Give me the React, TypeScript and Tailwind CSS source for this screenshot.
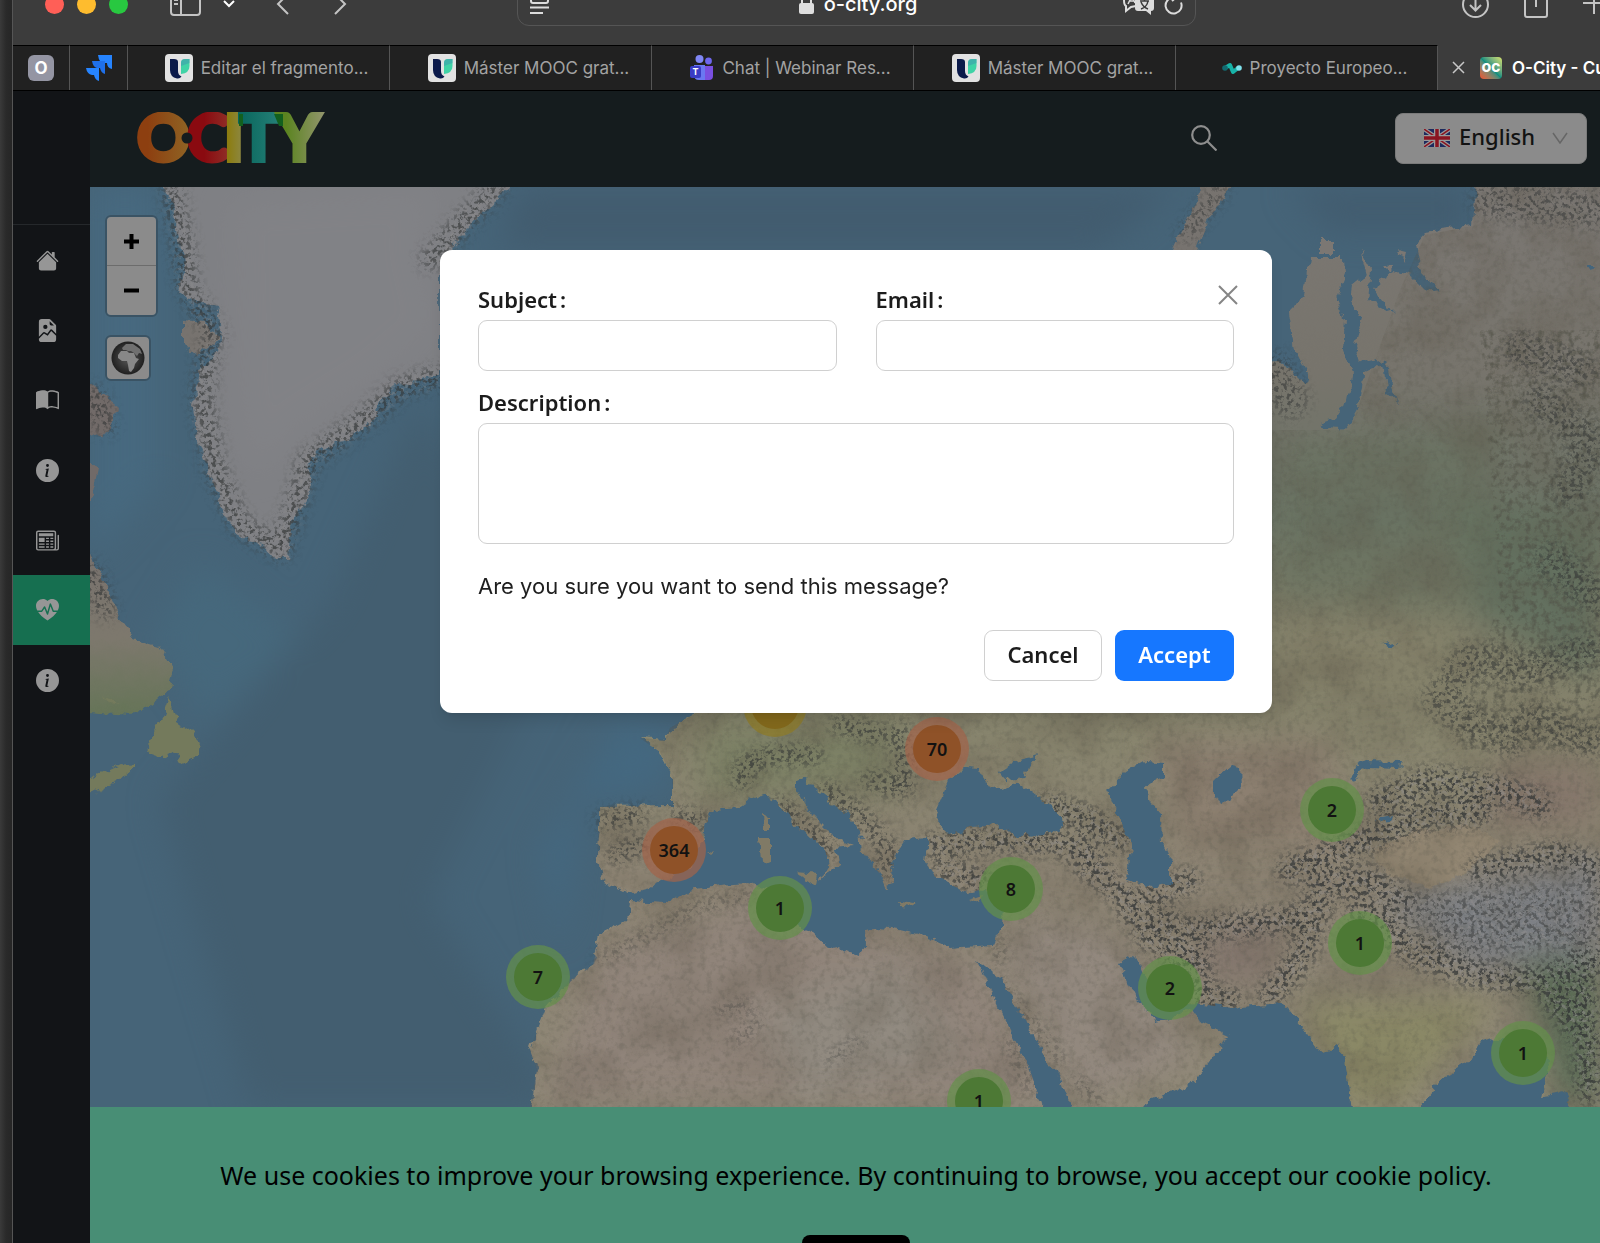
import React, { useState } from 'react';
import {
  BsBookHalf,
  BsFileEarmarkImageFill,
  BsHeartPulseFill,
  BsHouseFill,
  BsInfoCircleFill,
  BsNewspaper,
} from 'react-icons/bs';

interface Cluster {
  x: number;
  y: number;
  count: number;
  tone: 'green' | 'orange' | 'yellow';
}

const clusters: Cluster[] = [
  { x: 775, y: 705, count: 12, tone: 'yellow' },
  { x: 937, y: 749, count: 70, tone: 'orange' },
  { x: 674, y: 850, count: 364, tone: 'orange' },
  { x: 780, y: 908, count: 1, tone: 'green' },
  { x: 1011, y: 889, count: 8, tone: 'green' },
  { x: 979, y: 1101, count: 1, tone: 'green' },
  { x: 538, y: 977, count: 7, tone: 'green' },
  { x: 1332, y: 810, count: 2, tone: 'green' },
  { x: 1360, y: 943, count: 1, tone: 'green' },
  { x: 1170, y: 988, count: 2, tone: 'green' },
  { x: 1523, y: 1053, count: 1, tone: 'green' },
];

const tones = {
  green: { outer: '#64904a', inner: '#4d7935' },
  orange: { outer: '#a2644a', inner: '#8f5228' },
  yellow: { outer: '#8f7a24', inner: '#83691c' },
};

const navItems = [
  { label: 'Home', icon: BsHouseFill },
  { label: 'Gallery', icon: BsFileEarmarkImageFill },
  { label: 'Learn', icon: BsBookHalf },
  { label: 'Information', icon: BsInfoCircleFill },
  { label: 'News', icon: BsNewspaper },
  { label: 'Health', icon: BsHeartPulseFill, active: true },
  { label: 'About', icon: BsInfoCircleFill },
];

const MoocIcon = () => (
  <svg className="w-7 h-7 shrink-0" viewBox="0 0 28 28">
    <rect width="28" height="28" rx="4" fill="#e2e2e2" />
    <path d="M5 5h4q4 0 4 3v9q0 4 3.500 5.500Q15 25 12 24.500 5 23 5 16z" fill="#0b1a4a" />
    <path d="M16 20V9q0-4 4-4h4.500v7q0 7-8.500 8z" fill="#3fd3a6" />
    <path d="M16 12V9q0-4 4-4h4.500v4z" fill="#3f9fae" opacity=".6" />
  </svg>
);

const TeamsIcon = () => (
  <svg className="w-6 h-7 shrink-0" viewBox="0 0 24 28">
    <circle cx="9.500" cy="5" r="4" fill="#8087f5" />
    <circle cx="18.500" cy="7" r="3.400" fill="#6f67ee" />
    <path d="M14 12h9v10q0 4-4 4h-5z" fill="#7a4fe0" />
    <path d="M4 11h11v15H9q-5 0-5-5z" fill="#6a78f2" />
    <rect y="12" width="11" height="12" rx="2" fill="#3a3cc4" />
    <text x="5.500" y="21" fontSize="9" fontWeight="700" textAnchor="middle" fill="#fff" fontFamily="Inter, sans-serif">T</text>
  </svg>
);

const ProjectIcon = () => (
  <svg className="w-5 h-5 shrink-0" viewBox="0 0 20 20">
    <path d="M3 10l5-3 3 7 5-4" fill="none" stroke="#17b3a8" strokeWidth="4" strokeLinecap="round" strokeLinejoin="round" />
    <circle cx="3" cy="10" r="2.800" fill="#136a70" />
    <circle cx="17" cy="10" r="2.800" fill="#7fe3ee" />
  </svg>
);

const tabs = [
  { title: 'Editar el fragmento...', icon: MoocIcon },
  { title: 'Máster MOOC grat...', icon: MoocIcon },
  { title: 'Chat | Webinar Res...', icon: TeamsIcon },
  { title: 'Máster MOOC grat...', icon: MoocIcon },
  { title: 'Proyecto Europeo...', icon: ProjectIcon },
];

const BrowserToolbar = () => (
  <div className="h-[45px] shrink-0 bg-[#3c3c3c]">
    <div className="flex h-2 items-center pl-8 text-[#c4c4c4]">
      <div className="flex gap-[13px]">
        <span className="w-[19px] h-[19px] rounded-full bg-[#ff5f57]" />
        <span className="w-[19px] h-[19px] rounded-full bg-[#febc2e]" />
        <span className="w-[19px] h-[19px] rounded-full bg-[#28c840]" />
      </div>
      <button aria-label="Show sidebar" className="ml-[42px]">
        <svg width="31" height="24" viewBox="0 0 31 24" fill="none" stroke="currentColor" strokeWidth="2">
          <rect x="1" y="1" width="29" height="22" rx="3" />
          <path d="M11 1v22M4 8h4M4 12h4" />
        </svg>
      </button>
      <span className="ml-[11px] w-px h-7 bg-[#505050]" />
      <button aria-label="Tab groups" className="ml-[11px] text-white">
        <svg width="12" height="8" viewBox="0 0 12 8" fill="none" stroke="currentColor" strokeWidth="2"><path d="M1 1l5 5 5-5" /></svg>
      </button>
      <button aria-label="Back" className="ml-[41px]">
        <svg width="14" height="22" viewBox="0 0 14 22" fill="none" stroke="currentColor" strokeWidth="2"><path d="M12 1L2 11l10 10" /></svg>
      </button>
      <button aria-label="Forward" className="ml-[43px]">
        <svg width="14" height="22" viewBox="0 0 14 22" fill="none" stroke="currentColor" strokeWidth="2"><path d="M2 1l10 10L2 21" /></svg>
      </button>
      <div className="ml-[170px] flex h-[44px] w-[679px] shrink-0 items-center rounded-xl border border-[#555] px-3">
        <svg className="text-[#dcdcdc]" width="19" height="20" viewBox="0 0 19 20" fill="none" stroke="currentColor" strokeWidth="2">
          <rect x="1" y="1" width="17" height="8" rx="2" />
          <path d="M0 13.500h19M0 19h13" />
        </svg>
        <div className="flex flex-1 items-center justify-center gap-2.5 pl-[44px]">
          <svg width="15" height="20" viewBox="0 0 15 20" fill="#dedede">
            <rect y="9" width="15" height="11" rx="2" />
            <path d="M3 10V5q0-4 4.500-4T12 5v5" fill="none" stroke="#dedede" strokeWidth="2" />
          </svg>
          <span className="text-[20px] leading-6 font-medium text-white">o-city.org</span>
        </div>
        <svg width="32" height="24" viewBox="0 0 32 24" className="text-[#dcdcdc]">
          <path d="M13 14l-5 1-5 4v-5Q1 13 1 8q0-6 7-6h5" fill="none" stroke="currentColor" strokeWidth="2" />
          <path d="M5 12l4-8 3 7M6 9h5" fill="none" stroke="currentColor" strokeWidth="1.500" />
          <path d="M15 5h13q3 0 3 3v8q0 3-3 3v4l-5-4h-8q-3 0-3-3V8q0-3 3-3z" fill="currentColor" />
          <path d="M17 9h9M21.500 7v2M18 17q6-2 7-8M18 10q2 5 7 7" fill="none" stroke="#3c3c3c" strokeWidth="1.500" />
        </svg>
        <svg className="ml-[9px] text-[#dcdcdc]" width="19" height="22" viewBox="0 0 19 22" fill="none" stroke="currentColor" strokeWidth="2">
          <path d="M17 9.500A8 8 0 1 1 9.500 4.500h2M8 1l4 3.500L8 8" />
        </svg>
      </div>
      <button aria-label="Downloads" className="ml-[266px] shrink-0">
        <svg width="27" height="27" viewBox="0 0 27 27" fill="none" stroke="currentColor" strokeWidth="2">
          <circle cx="13.500" cy="13.500" r="12.500" />
          <path d="M13.500 6v13M8 14l5.500 5.500L19 14" />
        </svg>
      </button>
      <button aria-label="Share" className="ml-[35px] shrink-0">
        <svg width="24" height="27" viewBox="0 0 24 27" fill="none" stroke="currentColor" strokeWidth="2">
          <path d="M8 6H1v18q0 2 2 2h18q2 0 2-2V6h-7M12 0v16" />
        </svg>
      </button>
      <button aria-label="New tab" className="ml-[35px] shrink-0">
        <svg width="22" height="22" viewBox="0 0 22 22" fill="none" stroke="currentColor" strokeWidth="2"><path d="M0 10h22M11 0v21" /></svg>
      </button>
    </div>
  </div>
);

const TabStrip = () => (
  <div className="flex h-[46px] shrink-0 overflow-hidden border-b border-black bg-[#212121] text-[17px] leading-6 text-[#a3a3a3]">
    <div className="flex w-[57px] shrink-0 items-center justify-center border-t border-r border-t-black border-r-[#555]">
      <span className="flex h-[26px] w-[26px] items-center justify-center rounded-md bg-[#9495a3] text-[17px] font-bold text-white">O</span>
    </div>
    <div className="flex w-[58px] shrink-0 items-center justify-center border-t border-r border-t-black border-r-[#555]">
      <svg width="26" height="26" viewBox="0 0 26 26">
        <path d="M12 0h14v14q-5-1-5-6h-3q-5 0-6-8z" fill="#2684ff" />
        <path d="M6 6h13v13q-4-1-5-6h-3q-4-1-5-7z" fill="#1f70ea" />
        <path d="M0 13h13v13q-4-1-5-6H6q-5-1-6-7z" fill="#2684ff" />
      </svg>
    </div>
    {tabs.map((tab, index) => (
      <div key={index} className="flex w-[262px] shrink-0 items-center justify-center gap-2 border-t border-r border-t-black border-r-[#555] pl-4 whitespace-nowrap">
        <tab.icon />
        <span>{tab.title}</span>
      </div>
    ))}
    <div className="flex min-w-0 flex-1 items-center overflow-hidden bg-[#3c3c3c] pl-[14px] font-semibold whitespace-nowrap text-white">
      <button aria-label="Close tab" className="shrink-0">
        <svg width="13" height="13" viewBox="0 0 13 13" stroke="#c8c8c8" strokeWidth="1.500"><path d="M1 1l11 11M12 1L1 12" /></svg>
      </button>
      <span className="ml-[15px] flex h-[22px] w-[22px] shrink-0 items-center justify-center rounded bg-linear-to-tr from-[#f04a2a] via-[#0d8f7f] to-[#d8e36a] text-[12px] font-black text-white">OC</span>
      <span className="ml-[10px]">O-City - Cu</span>
    </div>
  </div>
);

const Sidebar = () => (
  <nav className="w-[77px] shrink-0 bg-[#121417]">
    <div className="h-[134px] border-b border-[#25282b]" />
    {navItems.map((item) => (
      <a
        key={item.label}
        href="#"
        aria-label={item.label}
        className={`flex h-[70px] items-center pl-[23px] ${item.active ? 'bg-[#166f50]' : ''}`}
      >
        <item.icon className="h-[23px] w-[23px] text-[#969696]" />
      </a>
    ))}
  </nav>
);

const Logo = () => (
  <svg width="190" height="52" viewBox="0 0 190 52" role="img" aria-label="O-City" fontFamily="Lato, sans-serif" fontWeight="900" fontSize="65" strokeWidth="4">
    <defs>
      <linearGradient id="lo"><stop offset=".2" stopColor="#8d3f10" /><stop offset="1" stopColor="#8f6424" /></linearGradient>
      <linearGradient id="lc"><stop offset=".4" stopColor="#8a0a10" /><stop offset="1" stopColor="#8f3028" /></linearGradient>
      <linearGradient id="li"><stop offset=".2" stopColor="#8c7d10" /><stop offset="1" stopColor="#8c8848" /></linearGradient>
      <linearGradient id="lt"><stop offset="0" stopColor="#08665c" /><stop offset="1" stopColor="#257f77" /></linearGradient>
      <linearGradient id="ly"><stop offset=".2" stopColor="#5b8420" /><stop offset="1" stopColor="#8f9468" /></linearGradient>
    </defs>
    <text x="0" y="49" fill="url(#lo)" stroke="url(#lo)">O</text>
    <text x="50" y="49" fill="url(#lc)" stroke="url(#lc)">C</text>
    <text x="87" y="49" fill="url(#li)" stroke="url(#li)">I</text>
    <text x="102" y="49" fill="url(#lt)" stroke="url(#lt)">T</text>
    <text x="141" y="49" fill="url(#ly)" stroke="url(#ly)">Y</text>
    <path d="M102 2h4v12h-4zM137 2h9v12h-4z" fill="#12601e" />
    <circle cx="50" cy="26" r="5.500" fill="#151c1e" />
  </svg>
);

const UkFlag = () => (
  <svg width="26" height="18" viewBox="0 0 26 18" className="shrink-0">
    <rect width="26" height="18" rx="1" fill="#1d2a5e" />
    <path d="M0 0l26 18M26 0L0 18" stroke="#999" strokeWidth="4" />
    <path d="M0 0l26 18M26 0L0 18" stroke="#8a1420" strokeWidth="1.500" />
    <path d="M13 0v18M0 9h26" stroke="#999" strokeWidth="6" />
    <path d="M13 0v18M0 9h26" stroke="#8a1420" strokeWidth="3.500" />
  </svg>
);

const SiteHeader = () => (
  <header className="flex h-24 shrink-0 items-center bg-[#151c1e] pr-[13px] pb-0.5 pl-[47px]">
    <Logo />
    <button aria-label="Search" className="mr-[178px] ml-auto">
      <svg width="26" height="26" viewBox="0 0 26 26" fill="none" stroke="#8e8e8e" strokeWidth="2.200">
        <circle cx="10" cy="10" r="8.800" />
        <path d="M16.500 16.500l9 9" />
      </svg>
    </button>
    <div className="flex h-[51px] w-[192px] items-center rounded-lg border border-[#7a7a7a] bg-[#8b8b8b] pr-[18px] pl-7">
      <UkFlag />
      <select aria-label="Language" className="ml-[9px] min-w-0 flex-1 appearance-none bg-transparent pb-1 font-[Noto_Sans,sans-serif] text-[22px] leading-8 font-medium text-[#131313] outline-none">
        <option>English</option>
      </select>
      <svg width="16" height="12" viewBox="0 0 16 12" fill="none" stroke="#666" strokeWidth="1.500"><path d="M1 1l7 10 7-10" /></svg>
    </div>
  </header>
);

const ranges = {
  // thick strokes that are filled with relief speckle
  ice: 'M172 190L182 240 188 290M195 300L215 335M208 350L202 400 215 470 240 525 282 550M280 550L297 500 308 460M310 460L370 415 400 388 440 376M430 260L470 215 495 190',
  europe: 'M745 765L770 755 815 755M740 780L750 770M605 820L640 815M680 815L700 822M615 855L640 845M780 805L830 850M825 790L860 815 890 850M870 780L905 790M900 730L905 780M885 860L890 870M840 725L880 735',
  anatolia: 'M935 845L970 840 1020 840 1080 845 1100 870M945 870L980 880M1050 805L1090 820 1120 840M1080 860L1130 900 1150 940M1150 895L1190 880',
  iran: 'M1130 910L1160 940 1200 980M1190 930L1290 920 1320 905 1300 960 1270 995M1230 1000L1200 995M1165 920L1200 960',
  asia: 'M1290 870L1340 850 1390 830 1430 815 1480 812M1380 800L1430 780 1500 790 1540 805M1320 885L1370 880 1400 900M1360 910L1420 955 1480 975 1540 980 1600 960M1480 870L1560 855 1600 870M1555 1000L1590 1040M1580 960L1590 1090',
  siberia: 'M1440 700L1470 660 1530 670 1590 650M1530 720L1590 740M1450 710L1510 740M1520 350L1580 370M1540 400L1590 440 1570 490M1490 200L1600 210M1550 560L1600 600M1275 370L1290 400',
  africa: 'M600 960L640 940 700 905 750 895M720 1010L750 1005M735 1040L760 1020M830 1060L860 1040M995 980L1030 1020 1060 1060M1075 1080L1100 1100M1000 940L1000 960M1010 1040L1030 1090',
};

const WorldMap = () => (
  <svg className="absolute inset-0 h-full w-full" viewBox="90 187 1510 920" preserveAspectRatio="xMidYMid slice" colorInterpolationFilters="sRGB" aria-hidden="true">
    <defs>
      <linearGradient id="land" x1="0" y1="187" x2="0" y2="1107" gradientUnits="userSpaceOnUse">
        <stop offset="0" stopColor="#7b7773" />
        <stop offset=".2" stopColor="#77746c" />
        <stop offset=".36" stopColor="#6c7466" />
        <stop offset=".45" stopColor="#7e7d68" />
        <stop offset=".6" stopColor="#88856e" />
        <stop offset=".75" stopColor="#8c8373" />
        <stop offset="1" stopColor="#8f8876" />
      </linearGradient>
      <linearGradient id="labrador" x1="0" y1="555" x2="0" y2="720" gradientUnits="userSpaceOnUse">
        <stop offset="0" stopColor="#77716d" />
        <stop offset=".5" stopColor="#7d786d" />
        <stop offset="1" stopColor="#647456" />
      </linearGradient>
      <filter id="coast" x="-5%" y="-5%" width="110%" height="110%">
        <feTurbulence type="fractalNoise" baseFrequency=".09" numOctaves="3" seed="4" />
        <feDisplacementMap in="SourceGraphic" scale="11" xChannelSelector="R" yChannelSelector="G" />
      </filter>
      <filter id="soft" x="-20%" y="-20%" width="140%" height="140%"><feGaussianBlur stdDeviation="16" /></filter>
      <filter id="speckle" x="90" y="187" width="1510" height="920" filterUnits="userSpaceOnUse">
        <feTurbulence type="fractalNoise" baseFrequency=".24" numOctaves="3" seed="8" result="n" />
        <feColorMatrix in="n" type="matrix" values="0 0 0 0 .2  0 0 0 0 .21  0 0 0 0 .21  6 0 0 0 -2.900" result="dark" />
        <feGaussianBlur in="SourceAlpha" stdDeviation="7" result="area" />
        <feComposite in="dark" in2="area" operator="in" />
      </filter>
      <filter id="glint" x="90" y="187" width="1510" height="920" filterUnits="userSpaceOnUse">
        <feTurbulence type="fractalNoise" baseFrequency=".22" numOctaves="3" seed="31" result="n" />
        <feColorMatrix in="n" type="matrix" values="0 0 0 0 .57  0 0 0 0 .56  0 0 0 0 .56  0 5 0 0 -2.500" result="light" />
        <feGaussianBlur in="SourceAlpha" stdDeviation="6" result="area" />
        <feComposite in="light" in2="area" operator="in" />
      </filter>
      <filter id="grain" x="90" y="187" width="1510" height="920" filterUnits="userSpaceOnUse">
        <feTurbulence type="fractalNoise" baseFrequency=".16" numOctaves="4" seed="19" />
        <feColorMatrix type="matrix" values="0 0 0 0 .32  0 0 0 0 .32  0 0 0 0 .28  3 0 0 0 -1.400" />
        <feComposite in2="SourceAlpha" operator="in" />
      </filter>
      <filter id="cloud" x="90" y="187" width="1510" height="920" filterUnits="userSpaceOnUse">
        <feTurbulence type="fractalNoise" baseFrequency=".02" numOctaves="5" seed="12" />
        <feColorMatrix type="matrix" values="0 0 0 0 .36  0 0 0 0 .33  0 0 0 0 .28  1.600 0 0 0 -.62" />
        <feComposite in2="SourceAlpha" operator="in" />
      </filter>
      <clipPath id="landClip">
        <path d="M1600 187V1107H530L537 1070 530 1050 545 1010 570 980 593 965 600 935 628 920 632 895 602 880 597 855 600 806 672 805 672 775 660 752 640 738 665 740 670 728 696 713 700 600H1270V430L1350 430 1400 290 1425 235 1473 226 1476 187z" />
      </clipPath>
    </defs>

    <rect x="90" y="187" width="1510" height="920" fill="#466478" />
    <g filter="url(#soft)">
      <path d="M420 400L560 640 430 900 560 1107H250L160 800 330 600z" fill="#435e70" />
      <path d="M520 187H1180L1100 250H500z" fill="#425c6f" />
      <path d="M1290 187H1470V230H1330z" fill="#425c6f" />
      <path d="M90 187H160V480L90 560z" fill="#47697f" />
      <path d="M150 640L200 560 300 640 210 720z" fill="#46687c" />
      <path d="M620 720L680 740 660 790 580 800 560 950 540 850z" fill="#446880" />
    </g>

    <g filter="url(#coast)">
      <path d="M163 187L172 205 178 240 185 265 178 290 186 298 218 306 222 330 218 352 200 372 192 410 197 440 208 470 218 500 232 525 243 540 262 543 276 558 288 558 292 520 303 505 313 480 308 465 318 450 345 440 372 420 385 395 400 385 440 374V262L480 215 510 187V180H160z" fill="#7f8084" />
      <path d="M184 320L205 322 218 340 196 356 184 345z" fill="#77736f" />
      <path d="M85 380L120 408 104 440 85 430zM85 455L98 470 88 515z" fill="#716a68" />
      <path d="M85 545L108 590 120 620 135 640 160 648 174 670 170 690 150 705 130 715 85 712z" fill="url(#labrador)" />
      <path d="M170 696L163 716 155 730 145 752 162 758 178 752 182 764 198 757 200 742 188 730 176 722zM85 780L120 764 138 765 125 776 90 794zM104 695L122 706 110 704z" fill="#747a5c" />
      <path d="M1205 180H1236L1208 222 1196 252H1172L1190 215z" fill="#77736f" />

      <path
        d="M1610 180V1115H530L537 1070 530 1050 545 1010 570 980 593 965 600 935 628 920 632 895 602 880 597 855 600 830 600 806 672 805 672 775 660 752 640 738 665 740 670 728 696 713 700 600H1260V360L1272 360 1290 370 1305 385 1308 375 1295 350 1290 310 1305 295 1310 258 1345 258 1346 275 1337 298 1345 320 1343 350 1352 375 1347 400 1335 418 1318 424 1325 429 1342 430 1355 415 1362 390 1363 372 1378 365 1385 370 1387 392 1398 402 1392 385 1390 368 1378 358 1360 362 1355 345 1362 320 1350 300 1352 287 1367 275 1360 250 1371 270 1368 300 1385 308 1395 315 1375 290 1380 280 1395 272 1412 277 1427 292 1440 290 1420 270 1415 243 1425 232 1473 226 1476 180z"
        fill="url(#land)"
      />
      <path d="M1320 240h14v14h-14zM1398 252l8 2-2 8zM1385 266l8-1-1 8z" fill="#7b7773" />
    </g>

    <path d="M230 200L440 187 420 240 440 330 380 380 300 430 250 480 235 400z" fill="#86868a" opacity=".4" filter="url(#soft)" />

    <g clipPath="url(#landClip)">
      <g filter="url(#soft)">
        <path d="M600 950L760 900 980 960 1060 1107H540z" fill="#90847a" />
        <path d="M760 1010L900 960 960 1060 800 1107z" fill="#918a80" />
        <path d="M1020 920L1110 930 1200 1060 1080 1107 1000 960z" fill="#92887e" />
        <path d="M700 720H900V790L700 800z" fill="#7c8065" />
        <path d="M1150 740L1330 740 1350 850 1180 850z" fill="#8c7f70" />
        <path d="M1300 1000H1500L1400 1107H1340z" fill="#8a8866" />
        <path d="M1380 900L1600 860V960L1480 970z" fill="#7d8085" />
        <path d="M1500 760H1600V830H1480z" fill="#85776b" />
        <path d="M1520 960H1600V1107H1560z" fill="#5c6c56" />
        <path d="M1450 500L1600 520V680L1480 620z" fill="#63705f" />
        <path d="M1280 440L1500 420 1480 620 1270 600z" fill="#68715f" opacity=".6" />
        <path d="M1270 620H1460L1440 720H1270z" fill="#84816a" />
        <path d="M1200 930L1290 920 1270 990 1200 980z" fill="#83766d" />
      </g>
      <path d="M1370 853L1404 833 1459 823 1501 840 1470 870 1432 888 1387 873z" fill="#928672" filter="url(#coast)" />
      <rect x="90" y="187" width="1510" height="920" filter="url(#cloud)" opacity=".4" />
      <rect x="90" y="187" width="1510" height="920" filter="url(#grain)" opacity=".22" />
      <path d="M1480 330H1600V750H1450L1500 600z" filter="url(#grain)" opacity=".6" />
    </g>

    {/* relief */}
    <g fill="none" stroke="#000" strokeLinecap="round" strokeLinejoin="round">
      <g filter="url(#glint)" opacity=".5">
        <path d={ranges.ice} strokeWidth="14" />
        <path d={ranges.anatolia} strokeWidth="18" />
        <path d={ranges.iran} strokeWidth="16" />
        <path d={ranges.asia} strokeWidth="22" />
        <path d="M1400 910L1600 900M1440 940L1600 930" strokeWidth="30" />
      </g>
      <g filter="url(#speckle)" opacity=".8">
        <path d={ranges.ice} strokeWidth="18" />
        <path d="M95 395L105 425M90 570L105 610" strokeWidth="18" />
        <path d={ranges.europe} strokeWidth="17" />
        <path d={ranges.anatolia} strokeWidth="24" />
        <path d={ranges.iran} strokeWidth="26" />
        <path d={ranges.asia} strokeWidth="28" />
        <path d="M1400 910L1600 900M1440 940L1600 930" strokeWidth="34" opacity=".6" />
        <path d={ranges.siberia} strokeWidth="36" opacity=".7" />
        <path d={ranges.africa} strokeWidth="10" opacity=".6" />
        <path d="M1185 235L1220 190" strokeWidth="12" />
      </g>
    </g>

    {/* inland seas */}
    <g fill="#44657c" filter="url(#coast)">
      <path d="M625 894L650 888 668 880 690 865 705 835 712 810 740 808 760 795 775 800 800 828 825 850 828 866 820 880 838 866 835 848 852 846 835 838 812 815 797 790 797 780 806 778 818 792 845 812 860 832 862 850 876 868 884 888 897 886 890 862 905 840 928 838 925 860 935 875 950 885 972 893 985 890 1003 905 1002 925 992 945 950 948 920 935 900 930 880 928 865 930 866 945 858 956 828 945 815 933 800 928 785 915 783 893 750 883 720 885 690 890 668 902 630 900z" />
      <path d="M933 818L942 797 949 780 966 767 978 768 987 783 992 790 1018 783 1045 803 1061 817 1063 828 1049 834 1018 835 997 825 973 827 949 835z" />
      <path d="M999 772L1018 760 1040 755 1028 768 1025 778 1004 780z" />
      <path d="M1146 760L1164 762 1164 777 1144 788 1151 803 1162 815 1163 843 1172 863 1172 883 1156 888 1129 880 1131 857 1132 842 1115 810 1108 790 1125 772z" />
      <path d="M1213 782L1232 764 1241 766 1242 787 1225 804 1213 798z" />
      <path d="M1351 780L1356 767 1366 762 1401 763 1399 768 1370 767 1360 771 1354 781z" />
      <path d="M977 960L1000 978 1020 1010 1040 1050 1060 1080 1075 1115H1045L1030 1070 1010 1030 995 1000 985 978z" />
      <path d="M1119 963L1132 956 1142 966 1150 985 1175 1000 1200 1002 1240 1008 1285 1005 1300 1023 1315 1045 1325 1052 1340 1045 1345 1060 1350 1090 1355 1115H1125L1150 1100 1190 1085 1210 1062 1227 1035 1200 1022 1190 1008 1180 1017 1155 1022 1140 1005 1130 985z" />
      <path d="M1412 1115L1440 1080 1470 1060 1480 1045 1500 1038 1535 1040 1550 1060 1543 1095 1565 1092 1575 1115z" />
      <path d="M1378 818l14-3-2 7-10 1zM1380 645l16-3-4 6zM1585 265l12 0-4 5z" />
    </g>
    <g fill="#807a66" filter="url(#coast)">
      <path d="M762 815l7 4 0 12-6 0zM758 838l12 0 0 22-10 2zM797 872l22 2-2 12zM899 902l16 2-2 4-12-1zM706 851l8 1-3 3zM970 900l12-4-4 8z" />
    </g>
  </svg>
);

const MapView = () => (
  <main className="relative min-h-0 flex-1 overflow-hidden bg-[#45647a]">
    <WorldMap />
    {clusters.map((cluster) => (
      <span
        key={`${cluster.x}-${cluster.y}`}
        className="absolute flex h-16 w-16 -translate-1/2 items-center justify-center rounded-full"
        style={{ left: cluster.x - 90, top: cluster.y - 187, background: `${tones[cluster.tone].outer}b3` }}
      >
        <span
          className="flex h-12 w-12 items-center justify-center rounded-full font-[Noto_Sans,sans-serif] text-[18px] leading-6 font-semibold text-[#121212]"
          style={{ background: tones[cluster.tone].inner }}
        >
          {cluster.count}
        </span>
      </span>
    ))}
    <div className="absolute top-7 left-[15px] flex flex-col items-start gap-[18px]">
      <div className="flex flex-col rounded-md border-2 border-[#3a5364] text-black">
        <button aria-label="Zoom in" className="flex h-[49px] w-[49px] items-center justify-center rounded-t border-b border-[#6c6c6c] bg-[#8b8b8b]">
          <svg width="15" height="15" viewBox="0 0 15 15" stroke="currentColor" strokeWidth="4"><path d="M0 7.500h15M7.500 0v15" /></svg>
        </button>
        <button aria-label="Zoom out" className="flex h-[49px] w-[49px] items-center justify-center rounded-b bg-[#8b8b8b]">
          <svg width="15" height="15" viewBox="0 0 15 15" stroke="currentColor" strokeWidth="4"><path d="M0 7.500h15" /></svg>
        </button>
      </div>
      <button aria-label="Map layers" className="flex h-[46px] w-[46px] items-center justify-center rounded-md border-2 border-[#3a5364] bg-[#8b8b8b]">
        <svg width="34" height="34" viewBox="0 0 34 34">
          <defs>
            <radialGradient id="globe"><stop offset=".3" stopColor="#484848" /><stop offset="1" stopColor="#202020" /></radialGradient>
          </defs>
          <circle cx="17" cy="17" r="16.500" fill="url(#globe)" />
          <path d="M7 14l3-4 6 0 2 2 5 0 2 5 3 1-4 5-1 4-3 4-2-1-1-6-1-4-5 0-4-3z" fill="#888" />
          <path d="M11 7l4-4 7 0 7 5 2 5-3-1-2 3-3-3-3-2-3 0-2-1-3 0z" fill="#707070" />
        </svg>
      </button>
    </div>
  </main>
);

const CookieBanner = () => (
  <section className="flex h-[136px] shrink-0 flex-col items-center overflow-hidden bg-[#488e75] pt-12 pl-[22px]">
    <p className="font-[Noto_Sans,sans-serif] text-[25px] leading-10 whitespace-nowrap text-black">
      We use cookies to improve your browsing experience. By continuing to browse, you accept our cookie policy.
    </p>
    <button aria-label="Accept cookies" className="mt-10 h-12 w-[108px] shrink-0 rounded-lg bg-black" />
  </section>
);

const labelClass = 'mb-1 flex gap-[3px] font-[Noto_Sans,sans-serif] text-[22px] leading-[34px] font-semibold text-[#1c1c1c]';
const fieldClass = 'block w-full rounded-[9px] border border-[#d0d0d0] bg-white px-4 text-[22px] outline-none';

const ContactDialog = () => {
  const [form, setForm] = useState({ subject: '', email: '', description: '' });

  const update = (e: React.ChangeEvent<HTMLInputElement | HTMLTextAreaElement>) =>
    setForm({ ...form, [e.target.name]: e.target.value });

  return (
    <form
      role="dialog"
      aria-label="Contact"
      onSubmit={(e) => e.preventDefault()}
      className="relative w-full max-w-[832px] rounded-xl bg-white px-[38px] py-8 shadow-lg"
    >
      <button type="button" aria-label="Close" className="absolute top-[35px] right-[34px]">
        <svg width="20" height="20" viewBox="0 0 20 20" stroke="#858585" strokeWidth="2"><path d="M1 1l18 18M19 1L1 19" /></svg>
      </button>
      <div className="grid grid-cols-2 gap-x-[39px]">
        <div>
          <label htmlFor="subject" className={labelClass}>Subject<span>:</span></label>
          <input id="subject" name="subject" value={form.subject} onChange={update} className={`${fieldClass} h-[51px]`} />
        </div>
        <div>
          <label htmlFor="email" className={labelClass}>Email<span>:</span></label>
          <input id="email" name="email" type="email" value={form.email} onChange={update} className={`${fieldClass} h-[51px]`} />
        </div>
      </div>
      <div className="mt-[14px]">
        <label htmlFor="description" className={labelClass}>Description<span>:</span></label>
        <textarea id="description" name="description" value={form.description} onChange={update} className={`${fieldClass} h-[121px] resize-none`} />
      </div>
      <p className="mt-[25px] text-[22px] leading-[35px] text-[#1f1f1f]">Are you sure you want to send this message?</p>
      <div className="mt-[26px] flex justify-end gap-[13px] font-[Noto_Sans,sans-serif] text-[22px] leading-8 font-semibold">
        <button type="button" className="h-[51px] w-[118px] rounded-[9px] border border-[#d0d0d0] bg-white pb-1 text-[#1c1c1c]">Cancel</button>
        <button type="submit" className="h-[51px] w-[119px] rounded-[9px] bg-[#1677ff] pb-1 text-white">Accept</button>
      </div>
    </form>
  );
};

export default function App() {
  return (
    <div className="flex h-screen overflow-hidden bg-[#2b2b2b] font-[Inter,sans-serif]">
      <div className="w-[13px] shrink-0 border-r border-[#555] bg-linear-to-r from-[#3a3a3a] via-[#2a2a2a] to-[#262626]" />
      <div className="flex min-w-0 flex-1 flex-col">
        <BrowserToolbar />
        <TabStrip />
        <div className="flex min-h-0 flex-1">
          <Sidebar />
          <div className="relative flex min-w-0 flex-1 flex-col">
            <SiteHeader />
            <MapView />
            <CookieBanner />
            <div className="absolute inset-x-0 top-[159px] flex justify-center pl-[22px]">
              <ContactDialog />
            </div>
          </div>
        </div>
      </div>
    </div>
  );
}
